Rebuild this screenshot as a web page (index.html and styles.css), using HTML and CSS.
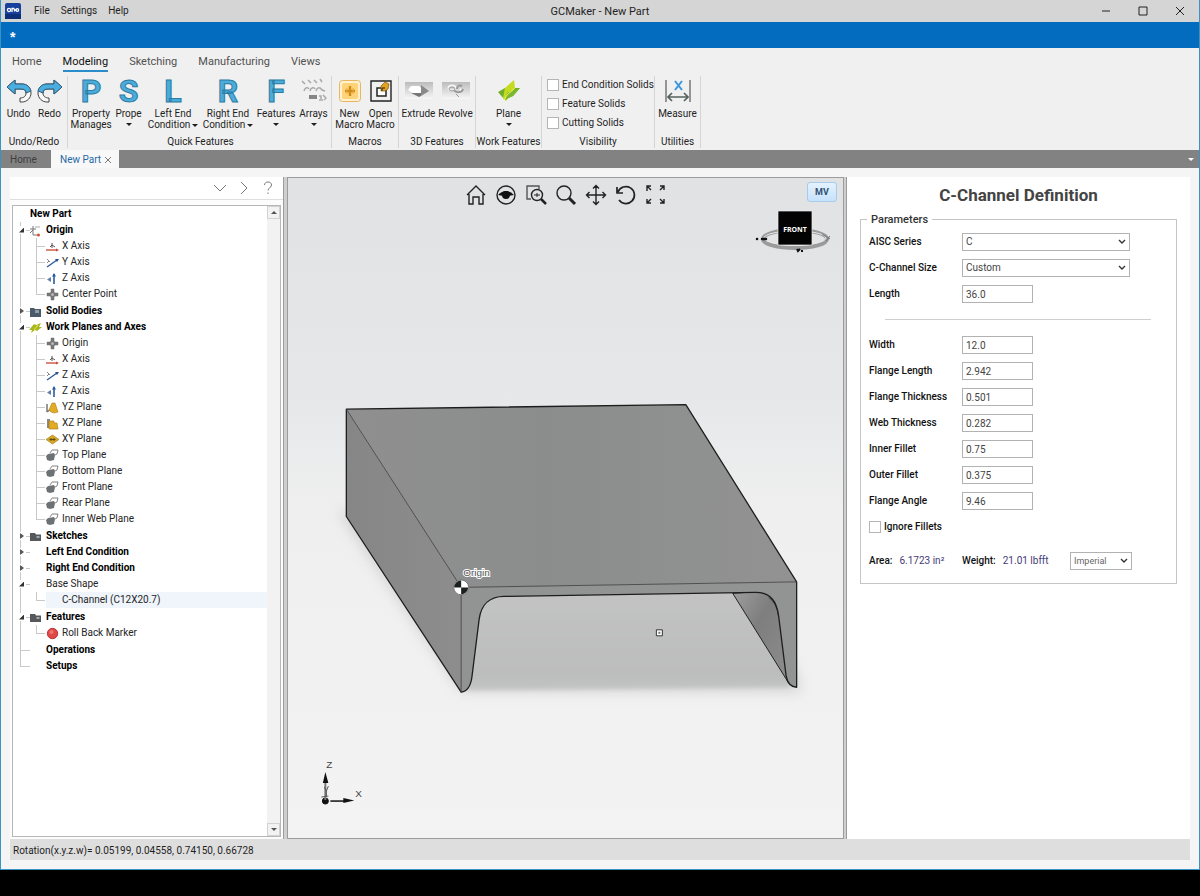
FILE: index.html
```html
<!DOCTYPE html>
<html lang="en">
<head>
<meta charset="utf-8">
<meta name="viewport" content="width=device-width, initial-scale=1">
<title>GCMaker - New Part</title>
<link rel="stylesheet" href="styles.css">
</head>
<body>
<svg class="defs" aria-hidden="true">
  <defs>
    <symbol id="i-xaxis" viewBox="0 0 13 13"><path d="M6 3v5M4 7l2-2 3 2" fill="none" stroke="#555"/><path d="M0 10h11" stroke="#c8452f" stroke-width="1.3"/><path d="M10 8.5l3 1.500-3 1.500z" fill="#c8452f"/></symbol>
    <symbol id="i-yaxis" viewBox="0 0 13 13"><path d="M1 11l10-7" stroke="#2a5aa0" stroke-width="1.400"/><path d="M9 3h4l-2 3z" fill="#2a4f8c"/><path d="M1 3l3 3M1 7l2-2" stroke="#888"/></symbol>
    <symbol id="i-zaxis" viewBox="0 0 13 13"><path d="M8 12V2" stroke="#2a5aa0" stroke-width="1.600"/><path d="M6 4.500L8 1l2 3.500z" fill="#2a5aa0"/><path d="M5 5v5L1 7.500z" fill="#5d7da8"/></symbol>
    <symbol id="i-point" viewBox="0 0 13 13"><path d="M5 1h3v3l1 1h3v3H9L8 9v3H5V9L4 8H1V5h3l1-1z" fill="#777" stroke="#6c6c6c" stroke-width=".5"/><circle cx="6.500" cy="6.500" r="1.500" fill="#b5b5b5"/></symbol>
    <symbol id="i-origin" viewBox="0 0 13 13"><path d="M4 2v9M1 5h6M4 11h5M1 9l3-3" fill="none" stroke="#777"/><path d="M6 3h5" stroke="#aaa"/><circle cx="9.500" cy="11" r="1.500" fill="#d0552d"/></symbol>
    <symbol id="i-folder" viewBox="0 0 13 13"><path d="M1 3h5l1 1.500h5V11H1z" fill="#55585c"/><path d="M7.500 6h3v2h-3z" fill="#a5a8aa"/></symbol>
    <symbol id="i-bodies" viewBox="0 0 13 13"><path d="M1 3h4l1 1h6v8H1z" fill="#4a5a68"/><path d="M6 5h4v3H6z" fill="#8f9ca6"/></symbol>
    <symbol id="i-planes" viewBox="0 0 13 13"><path d="M0 9l5-6 2 1 5-2-2 4 3 0-5 4-2-1-4 3 1-3z" fill="#a9b71c"/><path d="M5 9l4-5" stroke="#e2e85c"/></symbol>
    <symbol id="i-yz" viewBox="0 0 13 13"><path d="M1 3v8M1 11l4-3" stroke="#777" stroke-width="1.500"/><path d="M3 9l3-7 3 0 3 9-4 1-3-1z" fill="#e3ab22" stroke="#a97b18" stroke-width=".6"/></symbol>
    <symbol id="i-xz" viewBox="0 0 13 13"><path d="M1 2h3v9H1z" fill="#888"/><path d="M3 4l5 0 0 2 3 0 1 6H3z" fill="#e3ab22" stroke="#a97b18" stroke-width=".6"/></symbol>
    <symbol id="i-xy" viewBox="0 0 13 13"><path d="M0 6.500L6.500 2 13 6.500 6.500 11z" fill="#d9a925" stroke="#9b7618" stroke-width=".6"/><path d="M5 5v3M8 5v3M3.500 6.500h6" stroke="#5c4a18"/></symbol>
    <symbol id="i-plane" viewBox="0 0 13 13"><path d="M4 4l2-3h6l-1 4-2 1" fill="none" stroke="#777" stroke-width=".9"/><path d="M2 5l6-1 1 2-1 5-4 1-3-1-1-4z" fill="#6d7375"/></symbol>
    <symbol id="i-stop" viewBox="0 0 13 13"><circle cx="6.500" cy="6.500" r="5.200" fill="#e04848" stroke="#b73535"/><circle cx="5.500" cy="5" r="2" fill="#ef7474"/></symbol>
  </defs>
</svg>

<div class="window">
  <header class="titlebar">
    <nav class="menu">
      <svg class="app-logo" viewBox="0 0 16 16" aria-hidden="true"><rect width="16" height="16" rx="2" fill="#17409c"/><path d="M0 11h16v5H0z" fill="#0d2f78"/><g fill="none" stroke="#fff" stroke-width="1.300"><circle cx="4" cy="7" r="1.600"/><path d="M7 9V5.500h2M9.500 7h2M9.500 5.500v3"/><circle cx="12.300" cy="7" r="1.300"/></g></svg>
      <button type="button">File</button>
      <button type="button">Settings</button>
      <button type="button">Help</button>
    </nav>
    <h1 class="app-title">GCMaker - New Part</h1>
    <div class="window-buttons">
      <button type="button" aria-label="Minimize"><svg viewBox="0 0 10 10"><path d="M1 5h8"/></svg></button>
      <button type="button" aria-label="Maximize"><svg viewBox="0 0 10 10"><path d="M1 1h8v8H1z"/></svg></button>
      <button type="button" aria-label="Close"><svg viewBox="0 0 10 10"><path d="M1 1l8 8M9 1L1 9"/></svg></button>
    </div>
  </header>
  <div class="quickbar">*</div>

  <nav class="ribbon-tabs">
    <a href="#">Home</a><a href="#" class="active">Modeling</a><a href="#">Sketching</a><a href="#">Manufacturing</a><a href="#">Views</a>
  </nav>

  <div class="ribbon">
    <section class="group g-undo">
      <div class="tools">
        <button type="button" class="tool"><svg class="icon" viewBox="0 0 26 26"><path d="M1 9l8-7v4h7c5 0 9 4 9 9s-4 9-9 9h-2v-4c4 0 6-2 6-5s-2-4-5-4H9v5z" fill="#f8f8f8" stroke="#444"/><path d="M1 9l8-7v4h7c5 0 8 3 9 7l-5 2c0-3-2-4-5-4H9v5z" fill="#4aafe0" stroke="#2e5f7c"/></svg>Undo</button>
        <button type="button" class="tool"><svg class="icon flip" viewBox="0 0 26 26"><path d="M1 9l8-7v4h7c5 0 9 4 9 9s-4 9-9 9h-2v-4c4 0 6-2 6-5s-2-4-5-4H9v5z" fill="#f8f8f8" stroke="#444"/><path d="M1 9l8-7v4h7c5 0 8 3 9 7l-5 2c0-3-2-4-5-4H9v5z" fill="#4aafe0" stroke="#2e5f7c"/></svg>Redo</button>
      </div>
      <h2>Undo/Redo</h2>
    </section>
    <section class="group g-quick">
      <div class="tools">
        <button type="button" class="tool t-property"><span class="letter">P</span>Property<br>Manages</button>
        <button type="button" class="tool t-prope"><span class="letter">S</span>Prope<i class="caret below"></i></button>
        <button type="button" class="tool t-end"><span class="letter">L</span>Left End<br>Condition<i class="caret beside"></i></button>
        <button type="button" class="tool t-end"><span class="letter">R</span>Right End<br>Condition<i class="caret beside"></i></button>
        <button type="button" class="tool t-property"><span class="letter">F</span>Features<i class="caret below"></i></button>
        <button type="button" class="tool t-prope"><svg class="icon" viewBox="0 0 26 26" fill="none" stroke="#a9a9a9" stroke-width="1.500"><path d="M1 3l3 3M7 2l3 3M13 2l3 3M19 1l2 3"/><path d="M3 13c1-4 4-4 5-2M9 13c1-4 4-4 5-2M15 13c1-4 4-4 6-1l3 1"/><path d="M8 17h8v4H8z" fill="#858585" stroke="none"/><path d="M18 18h2v3M22 17l3 3-2 2M18 22h4"/></svg>Arrays<i class="caret below"></i></button>
      </div>
      <h2>Quick Features</h2>
    </section>
    <section class="group g-macros">
      <div class="tools">
        <button type="button" class="tool"><svg class="icon" viewBox="0 0 26 26"><rect x="2.500" y="2.500" width="21" height="21" rx="3" fill="#fff1cf" stroke="#e8b65c"/><rect x="5" y="5" width="16" height="16" rx="2" fill="#ffd378"/><path d="M13 8v10M8 13h10" stroke="#cf8d1c" stroke-width="2.500"/><path d="M10 10v6M16 10v6" stroke="#e5aa3f"/></svg>New<br>Macro</button>
        <button type="button" class="tool"><svg class="icon" viewBox="0 0 26 26"><path d="M3 3h20v20H3z" fill="none" stroke="#222" stroke-width="1.400"/><path d="M9 10h9v8H9z" fill="#fff" stroke="#222" stroke-width="1.500"/><path d="M13 8l4-4 4 2-1 5-3 2-4 0z" fill="#e2a11f" stroke="#7c5a14" stroke-width=".7"/><path d="M14 13v-3h3" fill="none" stroke="#222"/></svg>Open<br>Macro</button>
      </div>
      <h2>Macros</h2>
    </section>
    <section class="group g-3d">
      <div class="tools">
        <button type="button" class="tool"><svg class="icon wide" viewBox="0 0 28 26"><defs><linearGradient id="tile" x1="0" y1="0" x2="0" y2="1"><stop offset="0" stop-color="#bcbcbc"/><stop offset="1" stop-color="#f7f7f7"/></linearGradient></defs><path d="M0 4h28v17H0z" fill="url(#tile)"/><path d="M3 12l3-4h8l3 3v6h-6z" fill="#fff"/><path d="M16 7l8 6-8 5z" fill="#8a8a8a"/><path d="M6 15l8 4 2-1v-3z" fill="#777"/></svg>Extrude</button>
        <button type="button" class="tool"><svg class="icon wide" viewBox="0 0 28 26"><path d="M0 4h28v17H0z" fill="url(#tile)"/><g fill="none" stroke="#999" stroke-width="2"><ellipse cx="10" cy="10" rx="3.500" ry="2.500" stroke="#f5f5f5"/><ellipse cx="10" cy="11" rx="3" ry="2" stroke-width="1"/><path d="M12 12c2 3 8 3 9-1M20 8c-3-1-5 0-5 3"/><path d="M18 11l1 1" stroke="#fff"/><path d="M14 16l3 3" stroke-width="1"/></g></svg>Revolve</button>
      </div>
      <h2>3D Features</h2>
    </section>
    <section class="group g-work">
      <div class="tools">
        <button type="button" class="tool"><svg class="icon" viewBox="0 0 26 26"><path d="M2 14l7-4 15 0-7 8-9 3z" fill="#6fae2a"/><path d="M7 20l2-10L18 2l1 8-9 13z" fill="#c6da1e"/><path d="M9 22l2-7 13-5-7 8z" fill="#7cb82f"/><path d="M8 22l3-5 8-7" fill="none" stroke="#e9f05a"/></svg>Plane<i class="caret below"></i></button>
      </div>
      <h2>Work Features</h2>
    </section>
    <section class="group g-vis">
      <div class="checks">
        <label><input type="checkbox"> End Condition Solids</label>
        <label><input type="checkbox"> Feature Solids</label>
        <label><input type="checkbox"> Cutting Solids</label>
      </div>
      <h2>Visibility</h2>
    </section>
    <section class="group g-util">
      <div class="tools">
        <button type="button" class="tool"><svg class="icon" viewBox="0 0 26 26" fill="none"><path d="M1 2v22M25 2v22" stroke="#777" stroke-width="1.500"/><path d="M3 19h20M7 15l-4 4 4 4M19 15l4 4-4 4" stroke="#55635c" stroke-width="1.700"/><path d="M10 3l7 9M17 3l-7 9" stroke="#3b96dc" stroke-width="2"/></svg>Measure</button>
      </div>
      <h2>Utilities</h2>
    </section>
  </div>

  <nav class="doc-tabs">
    <a href="#">Home</a>
    <a href="#" class="active">New Part <svg viewBox="0 0 8 8" aria-hidden="true"><path d="M1 1l6 6M7 1L1 7"/></svg></a>
    <button type="button" aria-label="More tabs"><i class="caret"></i></button>
  </nav>

  <main class="workspace">
    <aside class="browser">
      <div class="browser-bar">
        <button type="button" aria-label="Collapse"><svg viewBox="0 0 14 14"><path d="M1 4l6 6 6-6"/></svg></button>
        <button type="button" aria-label="Next"><svg viewBox="0 0 14 14"><path d="M4 1l6 6-6 6"/></svg></button>
        <button type="button" aria-label="Help"><svg viewBox="0 0 14 14"><path d="M3.500 4c0-4 7-4 7 0 0 3-3.500 2.500-3.500 5.500M7 11.500V13"/></svg></button>
      </div>
      <div class="tree-box">
        <div class="tree-view">
          <div class="tree-root">New Part</div>
          <ul class="tree">
            <li><div class="row"><button type="button" class="toggle open" aria-label="Collapse Origin"></button><svg><use href="#i-origin"/></svg><b>Origin</b></div>
              <ul>
                <li><svg><use href="#i-xaxis"/></svg>X Axis</li>
                <li><svg><use href="#i-yaxis"/></svg>Y Axis</li>
                <li><svg><use href="#i-zaxis"/></svg>Z Axis</li>
                <li><svg><use href="#i-point"/></svg>Center Point</li>
              </ul></li>
            <li><div class="row"><button type="button" class="toggle" aria-label="Expand Solid Bodies"></button><svg><use href="#i-bodies"/></svg><b>Solid Bodies</b></div></li>
            <li><div class="row"><button type="button" class="toggle open" aria-label="Collapse Work Planes"></button><svg><use href="#i-planes"/></svg><b>Work Planes and Axes</b></div>
              <ul>
                <li><svg><use href="#i-point"/></svg>Origin</li>
                <li><svg><use href="#i-xaxis"/></svg>X Axis</li>
                <li><svg><use href="#i-yaxis"/></svg>Z Axis</li>
                <li><svg><use href="#i-zaxis"/></svg>Z Axis</li>
                <li><svg><use href="#i-yz"/></svg>YZ Plane</li>
                <li><svg><use href="#i-xz"/></svg>XZ Plane</li>
                <li><svg><use href="#i-xy"/></svg>XY Plane</li>
                <li><svg><use href="#i-plane"/></svg>Top Plane</li>
                <li><svg><use href="#i-plane"/></svg>Bottom Plane</li>
                <li><svg><use href="#i-plane"/></svg>Front Plane</li>
                <li><svg><use href="#i-plane"/></svg>Rear Plane</li>
                <li><svg><use href="#i-plane"/></svg>Inner Web Plane</li>
              </ul></li>
            <li><div class="row"><button type="button" class="toggle" aria-label="Expand Sketches"></button><svg><use href="#i-folder"/></svg><b>Sketches</b></div></li>
            <li><div class="row"><button type="button" class="toggle" aria-label="Expand Left End Condition"></button><svg></svg><b>Left End Condition</b></div></li>
            <li><div class="row"><button type="button" class="toggle" aria-label="Expand Right End Condition"></button><svg></svg><b>Right End Condition</b></div></li>
            <li><div class="row"><button type="button" class="toggle open" aria-label="Collapse Base Shape"></button><svg></svg><span>Base Shape</span></div>
              <ul><li><span class="selected">C-Channel (C12X20.7)</span></li></ul></li>
            <li><div class="row"><button type="button" class="toggle open" aria-label="Collapse Features"></button><svg><use href="#i-folder"/></svg><b>Features</b></div>
              <ul><li><svg><use href="#i-stop"/></svg>Roll Back Marker</li></ul></li>
            <li><div class="row"><span class="toggle none"></span><svg></svg><b>Operations</b></div></li>
            <li><div class="row"><span class="toggle none"></span><svg></svg><b>Setups</b></div></li>
          </ul>
        </div>
        <div class="scrollbar">
          <button type="button" aria-label="Scroll up"><i class="caret up"></i></button>
          <button type="button" aria-label="Scroll down"><i class="caret"></i></button>
        </div>
      </div>
    </aside>
    <div class="splitter"></div>

    <section class="viewport">
      <svg class="scene" viewBox="288 178 555 661" role="img" aria-label="C-Channel model">
        <defs>
          <linearGradient id="top" x1="0" x2="1" y1="0" y2="0"><stop offset="0" stop-color="#8f8f8f"/><stop offset=".45" stop-color="#8b8d8c"/><stop offset="1" stop-color="#929292"/></linearGradient>
          <linearGradient id="side" x1="0" x2="1"><stop offset="0" stop-color="#868686"/><stop offset="1" stop-color="#8d8d8d"/></linearGradient>
          <linearGradient id="inner" x1="0" x2="1" y1="0" y2="1"><stop offset="0" stop-color="#a0a0a0"/><stop offset=".4" stop-color="#7e7e7e"/><stop offset="1" stop-color="#8e8e8e"/></linearGradient>
          <linearGradient id="floor" x1="0" x2="0" y1="0" y2="1"><stop offset="0" stop-color="#c3c3c3"/><stop offset=".85" stop-color="#bcbdbd"/><stop offset="1" stop-color="#c4c4c4"/></linearGradient>
          <filter id="soft" x="-20%" y="-20%" width="140%" height="140%"><feGaussianBlur stdDeviation="7"/></filter>
          <filter id="soft2" x="-10%" y="-10%" width="120%" height="120%"><feGaussianBlur stdDeviation="2"/></filter>
        </defs>
        <path d="M338 512L461 692H803L790 660 600 520z" fill="#a5a5a5" opacity=".4" filter="url(#soft)"/>
        <path d="M466 590H790V688L466 691z" fill="url(#floor)" filter="url(#soft2)"/>
        <path d="M733 594L786 679 789 684V590z" fill="url(#inner)" stroke="#222"/>
        <path d="M769 598q8 5 10 19" stroke="#333" fill="none"/>
        <path d="M346 409.500L461 588V693L346 517z" fill="url(#side)"/>
        <path d="M346 409.500L686 405 797 582.500 461 588z" fill="url(#top)"/>
        <path d="M461 588L797 582.500V688C791 688 788 684 786.500 677L779 617C777 602 771 593 756 593L504 597C490 597 481 605 479 620L472 676C471 686 468 692 461 693z" fill="#929393"/>
        <g fill="none" stroke="#1d1d1d" stroke-linejoin="round">
          <path d="M461 693L346 517V409.500L686 405 797 582.500V688C791 688 788 684 786.500 677L779 617C777 602 771 593 756 593L504 597C490 597 481 605 479 620L472 676C471 686 468 692 461 693z" stroke-width="1.300"/>
          <path d="M346 409.500L461 588 797 582.500M461 588V693" stroke="#454545" stroke-width=".9"/>
        </g>
        <circle cx="461" cy="588" r="7.500" fill="#fff" stroke="#777"/>
        <path d="M461 588v-7a7 7 0 0 0-7 7zM461 588v7a7 7 0 0 0 7-7z" fill="#1b211c"/>
        <text x="463" y="577" class="origin-label">Origin</text>
        <path d="M656.500 630.500h6v6h-6z" fill="#fff" stroke="#333"/><path d="M658.500 632.500h2v2h-2z" fill="#777"/>
        <g stroke="#111" fill="#111">
          <circle cx="325" cy="802" r="3"/><path d="M325 801V782" stroke="#777" stroke-width="2"/><path d="M322.500 784l2.500-11 3 11zM343 799l11 2.500-11 2.500z" stroke="none"/><path d="M330 802h14" stroke-width="1.500"/><path d="M324 788l2 4 2-5M326 792v5M321 798l7-1" stroke="#555" fill="none"/>
        </g>
        <text x="326" y="769" class="axis-label">Z</text><text x="355" y="798" class="axis-label">X</text>
      </svg>
      <div class="view-tools">
        <button type="button" aria-label="Home view"><svg viewBox="0 0 22 22"><path d="M2 11l9-9 9 9M4 10v10h4v-7h6v7h4V10"/></svg></button>
        <button type="button" aria-label="Look at"><svg viewBox="0 0 22 22"><circle cx="11" cy="11" r="9"/><path d="M3 11q8-8 16 0-8 2-16 0z" fill="#111" stroke="none"/><circle cx="11" cy="11" r="4" fill="#111" stroke="none"/></svg></button>
        <button type="button" aria-label="Zoom window"><svg viewBox="0 0 22 22"><path d="M6 15H2V2h12v3" stroke="#555"/><circle cx="12" cy="11" r="5.500"/><path d="M9 11h6M12 9v4" stroke-width="1"/><path d="M16 15l5 5" stroke-width="2.500"/></svg></button>
        <button type="button" aria-label="Zoom"><svg viewBox="0 0 22 22"><circle cx="9" cy="9" r="7"/><path d="M14 14l6 6" stroke-width="3"/></svg></button>
        <button type="button" aria-label="Pan"><svg viewBox="0 0 22 22"><path d="M11 2v18M2 11h18M8 4.500L11 1.500l3 3M8 17.500l3 3 3-3M4.500 8l-3 3 3 3M17.500 8l3 3-3 3"/></svg></button>
        <button type="button" aria-label="Rotate"><svg viewBox="0 0 22 22"><path d="M3 8a8.500 8.500 0 1 1 1 8M2 3v6h6" stroke-width="1.700"/></svg></button>
        <button type="button" aria-label="Fit"><svg viewBox="0 0 22 22"><path d="M2 7V2h4M2 2l4 4M15 2h4v4M19 2l-4 4M2 15v4h4M2 19l4-4M19 15v4h-4M19 19l-4-4"/></svg></button>
      </div>
      <div class="view-cube">
        <button type="button" class="mv">MV</button>
        <svg viewBox="0 0 78 46" role="img" aria-label="View orientation: front"><ellipse cx="40" cy="31" rx="32" ry="9" fill="none" stroke="#9b9b9b" stroke-width="4"/><ellipse cx="40" cy="30" rx="31" ry="7" fill="none" stroke="#e8e8e8"/><path d="M2 31h.1M7 31h4" stroke="#111" stroke-width="2.500" stroke-linecap="round"/><path d="M67 26l8 5M75 28l-4 5" stroke="#777"/><path d="M42 41l1 2 2-2M46 43h2" stroke="#111" stroke-width="2"/><path d="M23 3h34v34H23z" fill="#030303" stroke="#eee" stroke-width=".7"/><text x="40" y="24" class="cube-label">FRONT</text></svg>
      </div>
    </section>
    <div class="splitter"></div>

    <section class="properties">
      <h2>C-Channel Definition</h2>
      <form>
        <fieldset>
          <legend>Parameters</legend>
          <div class="fields">
            <label for="series">AISC Series</label><select id="series"><option>C</option></select>
            <label for="size">C-Channel Size</label><select id="size"><option>Custom</option></select>
            <label for="length">Length</label><input type="text" id="length" value="36.0">
          </div>
          <hr>
          <div class="fields">
            <label for="width">Width</label><input type="text" id="width" value="12.0">
            <label for="fl">Flange Length</label><input type="text" id="fl" value="2.942">
            <label for="ft">Flange Thickness</label><input type="text" id="ft" value="0.501">
            <label for="wt">Web Thickness</label><input type="text" id="wt" value="0.282">
            <label for="if">Inner Fillet</label><input type="text" id="if" value="0.75">
            <label for="of">Outer Fillet</label><input type="text" id="of" value="0.375">
            <label for="fa">Flange Angle</label><input type="text" id="fa" value="9.46">
          </div>
          <label class="ignore"><input type="checkbox"> Ignore Fillets</label>
          <div class="totals">
            <div><b>Area:</b><output>6.1723 in²</output></div>
            <div><b>Weight:</b><output>21.01 lbfft</output></div>
            <select aria-label="Units"><option>Imperial</option></select>
          </div>
        </fieldset>
      </form>
    </section>
  </main>
  <footer class="status"><span>Rotation(x.y.z.w)= 0.05199, 0.04558, 0.74150, 0.66728</span></footer>
</div>
</body>
</html>
```
FILE: styles.css
```css
* { box-sizing: border-box; }
body {
  margin: 0;
  min-height: 100vh;
  background: #000;
  color: #1f1f1f;
  font: 10px/12px Roboto, "Noto Sans", sans-serif;
}
button {
  margin: 0;
  padding: 0;
  border: 0;
  background: none;
  color: inherit;
  font: inherit;
}
a { color: inherit; text-decoration: none; }
h1, h2 { margin: 0; font: inherit; }
.defs { display: none; }

.window {
  display: flex;
  flex-direction: column;
  min-height: calc(100vh - 26px);
  border: solid #3795c4;
  border-width: 0 1px 1px;
  background: #f5f5f5;
}

.titlebar {
  display: grid;
  grid-template-columns: 1fr auto 1fr;
  align-items: center;
  height: 22px;
  background: #d5d5d5;
}
.menu { display: flex; align-items: center; gap: 11px; padding-left: 4px; }
.app-logo { width: 16px; height: 16px; margin-right: 2px; }
.app-title { padding-top: 1px; font-size: 11px; }
.window-buttons { display: flex; justify-content: flex-end; gap: 27px; padding-right: 14px; }
.window-buttons svg { display: block; width: 10px; height: 10px; fill: none; stroke: #222; }
.quickbar {
  height: 26px;
  padding-left: 9px;
  background: #046cbe;
  color: #fff;
  font: bold 14px/30px "Liberation Sans", sans-serif;
}

.ribbon-tabs { display: flex; gap: 21px; padding: 6px 11px 0; background: #f0f0f0; }
.ribbon-tabs a { height: 18px; color: #505050; font-size: 11px; line-height: 16px; }
.ribbon-tabs .active { border-bottom: 2px solid #2a8ccb; color: #111; }

.ribbon { display: flex; padding: 4px 0 2px; background: #f0f0f0; }
.group {
  display: flex;
  flex-direction: column;
  justify-content: space-between;
  height: 72px;
  border-right: 1px solid #d5d5d5;
}
.group h2 { text-align: center; line-height: 12px; white-space: nowrap; }
.tools { display: flex; justify-content: center; align-items: flex-start; }
.tool {
  display: block;
  width: 31px;
  line-height: 11px;
  white-space: nowrap;
}
.tool .icon, .letter { display: block; width: 26px; height: 26px; margin: 2px auto 4px; }
.tool .wide { width: 28px; }
.flip { transform: scaleX(-1); }
.letter {
  color: #4bacd9;
  font: bold 32px/26px Roboto, sans-serif;
  -webkit-text-stroke: 1px #2c7ba4;
}
.caret {
  display: inline-block;
  border: 3px solid transparent;
  border-top-color: currentColor;
  border-bottom: 0;
  vertical-align: middle;
}
.caret.below { display: block; width: 6px; margin: 4px auto 0; }
.caret.beside { margin-left: 2px; }
.caret.up { border-bottom: 3px solid; border-top: 0; }
.g-undo { width: 67px; }
.g-quick { width: 264px; padding-left: 2px; }
.g-macros { width: 67px; }
.g-3d { width: 77px; }
.g-work { width: 66px; }
.g-vis { width: 113px; }
.g-util { width: 46px; }
.t-property { width: 41px; }
.t-prope { width: 34px; }
.t-end { width: 55px; }
.g-3d .tool { width: 37px; }
.g-util .tool { width: 44px; }
.checks { display: grid; gap: 7px; padding: 3px 0 0 5px; }
.checks label, .ignore { display: flex; align-items: center; gap: 3px; white-space: nowrap; }
input[type="checkbox"] {
  appearance: none;
  width: 12px;
  height: 12px;
  margin: 0;
  border: 1px solid #b5b5b5;
  background: #fff;
}

.doc-tabs {
  display: flex;
  height: 18px;
  background: #828282;
  color: #404040;
  line-height: 19px;
}
.doc-tabs a { padding: 0 9px; }
.doc-tabs a:first-child { width: 50px; }
.doc-tabs .active { padding-right: 7px; background: #f8f8f8; color: #2769a6; }
.doc-tabs svg { width: 8px; height: 8px; stroke: #777; vertical-align: middle; }
.doc-tabs button { margin-left: auto; padding-right: 5px; color: #fff; line-height: 12px; }

.workspace {
  display: grid;
  grid-template-columns: 273px 5px minmax(0, 1fr) 4px 343px;
  flex: 1;
  padding: 9px 9px 0;
}
.splitter { border: solid #9c9c9c; border-width: 0 1px; background: #cfcfcf; }

.browser { display: flex; flex-direction: column; padding-bottom: 2px; background: #fcfcfc; }
.browser-bar {
  display: flex;
  justify-content: flex-end;
  align-items: center;
  gap: 10px;
  height: 23px;
  margin-bottom: 5px;
  padding-right: 8px;
  border-bottom: 1px solid #dcdfe0;
  background: #fff;
}
.browser-bar svg { display: block; width: 14px; height: 14px; fill: none; stroke: #777; }
.tree-box {
  display: flex;
  flex: 1;
  margin: 0 2px;
  border: 1px solid #b5b8ba;
  background: #fff;
}
.tree-view { flex: 1; color: #252525; line-height: 16px; }
.tree-root { height: 16px; padding-left: 17px; color: #000; font-weight: bold; line-height: 15px; }
.tree, .tree ul { margin: 0; padding: 0; list-style: none; }
.tree b { color: #000; }
.tree > li {
  background:
    linear-gradient(#c9c9c9, #c9c9c9) 7px 0 / 1px 100% no-repeat,
    linear-gradient(#c9c9c9, #c9c9c9) 7px 8px / 10px 1px no-repeat;
}
.tree > li:last-child { background-size: 1px 8px, 10px 1px; }
.row { display: flex; align-items: center; height: 16px; padding-left: 3px; }
.row svg { width: 13px; height: 13px; margin: 0 4px 0 3px; }
.toggle { width: 10px; height: 8px; background: #fff; }
.toggle::before {
  content: "";
  display: block;
  width: 4px;
  height: 6px;
  margin-left: 4px;
  background: #555;
  clip-path: polygon(0 0, 100% 50%, 0 100%);
}
.toggle.open::before {
  width: 5px;
  height: 5px;
  margin-left: 3px;
  background: #333;
  clip-path: polygon(100% 0, 100% 100%, 0 100%);
}
.toggle.none { background: none; }
.toggle.none::before { display: none; }
.tree ul { padding-bottom: 1px; margin-left: 23px; }
.tree ul li {
  display: flex;
  align-items: center;
  gap: 3px;
  height: 16px;
  padding-left: 10px;
  background:
    linear-gradient(#c9c9c9, #c9c9c9) 0 0 / 1px 100% no-repeat,
    linear-gradient(#c9c9c9, #c9c9c9) 0 8px / 9px 1px no-repeat;
}
.tree ul li:last-child { background-size: 1px 8px, 9px 1px; }
.tree ul svg { width: 13px; height: 13px; }
.selected { flex: 1; padding-left: 16px; background: #eff5fb; }
.scrollbar {
  display: flex;
  flex-direction: column;
  justify-content: space-between;
  width: 13px;
  background: #f2f2f2;
}
.scrollbar button { height: 13px; border: 1px solid #d2d2d2; line-height: 8px; color: #555; }

.viewport {
  position: relative;
  border: solid #9c9c9c;
  border-width: 1px 0;
  background: linear-gradient(#e1e2e4, #e5e7e9 32%, #efefef 50%, #f3f3f3);
}
.scene { position: absolute; width: 100%; height: 100%; }
.origin-label {
  fill: #555;
  stroke: #fff;
  stroke-width: 2px;
  paint-order: stroke;
  font: 10px "Liberation Sans", sans-serif;
}
.axis-label { fill: #444; font: 10px "Liberation Sans", sans-serif; }
.cube-label { fill: #fff; font: bold 7px "Noto Sans", sans-serif; text-anchor: middle; }
.view-tools { position: absolute; top: 6px; left: 0; right: 0; display: flex; justify-content: center; }
.view-tools button { width: 30px; }
.view-tools svg {
  display: block;
  width: 22px;
  height: 22px;
  margin: auto;
  fill: none;
  stroke: #222;
  stroke-width: 1.400;
}
.view-cube { position: absolute; top: 4px; right: 6px; display: grid; gap: 6px; }
.view-cube svg { width: 78px; height: 46px; margin-right: 4px; }
.mv {
  justify-self: end;
  width: 30px;
  height: 20px;
  border: 1px solid #a9cbe8;
  border-radius: 3px;
  background: linear-gradient(#e4f2fe, #c6e2fb);
  color: #33506e;
  font-size: 9px;
  font-weight: bold;
}

.properties { padding: 8px 13px 0; background: #fff; color: #111; }
.properties h2 { color: #444; font-size: 17px; font-weight: bold; line-height: 20px; text-align: center; }
fieldset {
  min-width: 0;
  margin: 7px 0 0;
  padding: 6px 8px 13px;
  border: 1px solid #c5c5c5;
}
legend {
  margin-left: -2px;
  padding: 0 4px;
  color: #333;
  font-size: 11px;
  font-weight: 500;
  line-height: 15px;
}
.fields { display: grid; grid-template-columns: 93px 1fr; gap: 8px 0; align-items: center; }
.fields label, .ignore, .totals b { font-weight: 500; }
.fields label { line-height: 14px; }
.fields input, select {
  width: 71px;
  height: 18px;
  padding: 0 3px;
  border: 1px solid #b2b2b2;
  border-radius: 0;
  background: #fff;
  color: #444;
  font: inherit;
}
select {
  width: 168px;
  padding-right: 14px;
  appearance: none;
  background: #fff url("data:image/svg+xml,%3Csvg xmlns='http://www.w3.org/2000/svg' width='8' height='6'%3E%3Cpath d='M1 1l3 3 3-3' fill='none' stroke='%23333' stroke-width='1.400'/%3E%3C/svg%3E") no-repeat right 3px center;
}
.fields select { width: 168px; }
hr { height: 1px; margin: 16px 17px 16px 16px; border: 0; background: #cfcfcf; }
.ignore { margin-top: 11px; }
.totals {
  display: grid;
  grid-template-columns: 93px 108px 62px;
  align-items: center;
  margin-top: 19px;
}
.totals div { display: flex; gap: 7px; white-space: nowrap; }
.totals output { color: #453a78; }
.totals select { width: 62px; color: #666; font-size: 9px; }

.status { margin: 0 9px 9px; padding: 2px 3px 0; background: #dedede; line-height: 19px; }
```
